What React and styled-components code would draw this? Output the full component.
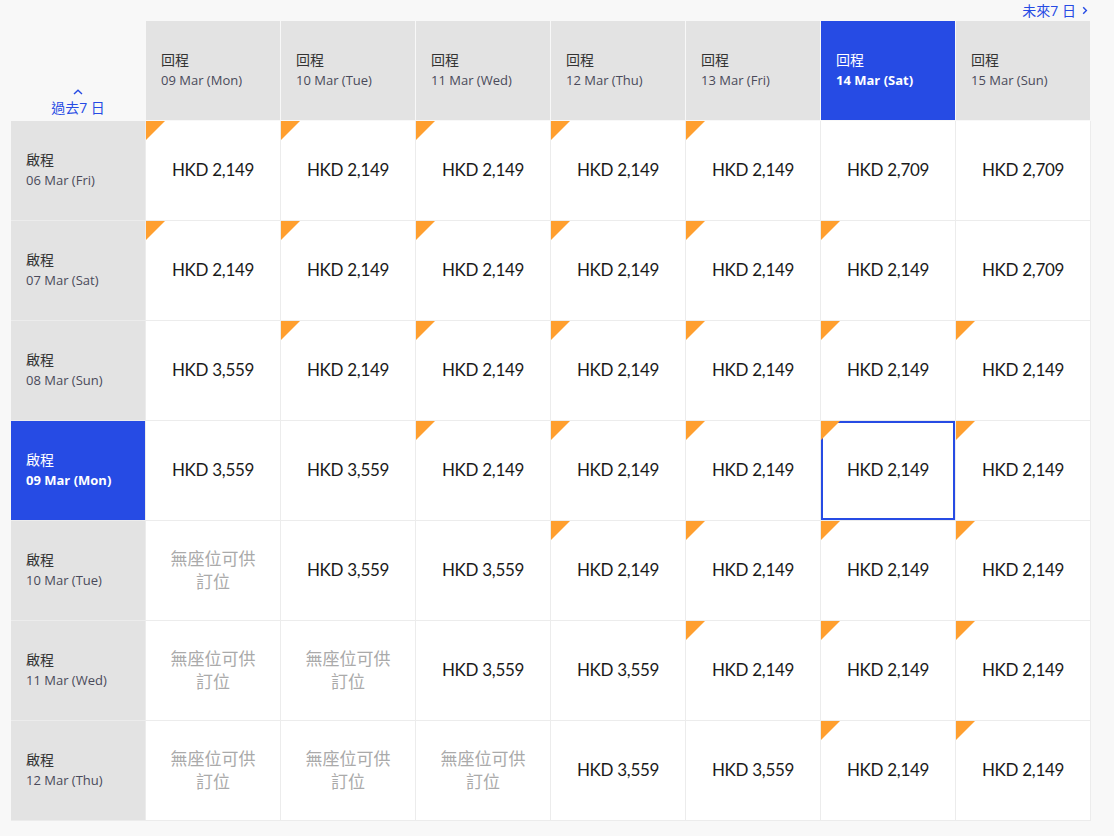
import React from 'react'
import styled, { createGlobalStyle, css } from 'styled-components'

const GlobalStyle = createGlobalStyle`
  body {
    margin: 0;
    background: #f8f8f8;
    font-family: 'Open Sans', 'Noto Sans CJK TC', sans-serif;
  }
`

const BLUE = '#264be4'
const COL = 134

const Page = styled.div`
  width: 1079px;
  padding: 0 0 0 11px;
`

const TopBar = styled.div`
  height: 21px;
  display: flex;
  justify-content: flex-end;
  align-items: center;
  padding-right: 2px;
`

const NavLink = styled.a`
  font-size: 14px;
  color: ${BLUE};
  cursor: pointer;
  font-family: 'Open Sans', 'Noto Sans CJK TC', sans-serif;
  display: inline-flex;
  align-items: center;
  gap: 6px;
  line-height: 1;
`

const HeaderRow = styled.div`
  display: grid;
  grid-template-columns: repeat(8, ${COL}px);
  column-gap: 1px;
  height: 99px;
  margin-bottom: 1px;
`

const Corner = styled.div`
  display: flex;
  flex-direction: column;
  align-items: center;
  justify-content: flex-end;
  padding-bottom: 5px;
`

const Caret = styled.svg`
  display: block;
  margin-bottom: 6px;
`

const HeadCell = styled.div`
  display: flex;
  flex-direction: column;
  justify-content: center;
  padding: 0 15px 3px;
  background: ${p => (p.active ? BLUE : '#e3e3e3')};
  color: ${p => (p.active ? '#fff' : '#333')};
`

const Label = styled.div`
  font-size: 14px;
  line-height: 20px;
  font-family: 'Noto Sans CJK TC', sans-serif;
`

const DateText = styled.div`
  font-size: 13px;
  line-height: 18px;
  margin-top: 2px;
  font-family: 'Open Sans', sans-serif;
  ${p => p.active ? css`
    font-weight: 700;
    color: #fff;
  ` : css`
    color: #4a4a5a;
  `}
`

const Body = styled.div`
  display: grid;
  grid-template-columns: repeat(8, ${COL}px);
  grid-auto-rows: 99px;
  gap: 1px;
  background: #ececec;
  padding: 0 1px 1px 0;
  width: max-content;
`

const PriceCell = styled.div`
  position: relative;
  background: #fff;
  display: flex;
  align-items: center;
  justify-content: center;
  text-align: center;
  ${p => p.selected && css`
    box-shadow: inset 0 0 0 2px ${BLUE};
  `}
`

const Flag = styled.span`
  position: absolute;
  top: 0;
  left: 0;
  width: 0;
  height: 0;
  border-top: 19px solid #ff9f2f;
  border-right: 19px solid transparent;
`

const Price = styled.span`
  font-family: 'Lato', sans-serif;
  font-weight: 400;
  font-size: 17px;
  letter-spacing: -0.3px;
  color: #1a1a1a;
  margin-bottom: 2px;
`

const SoldOut = styled.span`
  font-family: 'Noto Sans CJK TC', serif;
  font-size: 17px;
  line-height: 23px;
  color: #aaa;
  width: 90px;
  margin-bottom: 3px;
`

const returns = [
  '09 Mar (Mon)', '10 Mar (Tue)', '11 Mar (Wed)', '12 Mar (Thu)',
  '13 Mar (Fri)', '14 Mar (Sat)', '15 Mar (Sun)'
]
const activeReturn = 5

const A = 'HKD 2,149'
const B = 'HKD 2,709'
const C = 'HKD 3,559'
const N = null

// [price, hasFlag]
const rows = [
  { date: '06 Mar (Fri)', cells: [[A, 1], [A, 1], [A, 1], [A, 1], [A, 1], [B, 0], [B, 0]] },
  { date: '07 Mar (Sat)', cells: [[A, 1], [A, 1], [A, 1], [A, 1], [A, 1], [A, 1], [B, 0]] },
  { date: '08 Mar (Sun)', cells: [[C, 0], [A, 1], [A, 1], [A, 1], [A, 1], [A, 1], [A, 1]] },
  { date: '09 Mar (Mon)', active: true, cells: [[C, 0], [C, 0], [A, 1], [A, 1], [A, 1], [A, 1], [A, 1]] },
  { date: '10 Mar (Tue)', cells: [[N, 0], [C, 0], [C, 0], [A, 1], [A, 1], [A, 1], [A, 1]] },
  { date: '11 Mar (Wed)', cells: [[N, 0], [N, 0], [C, 0], [C, 0], [A, 1], [A, 1], [A, 1]] },
  { date: '12 Mar (Thu)', cells: [[N, 0], [N, 0], [N, 0], [C, 0], [C, 0], [A, 1], [A, 1]] }
]

const App = () =>
  <Page>
    <GlobalStyle />
    <TopBar>
      <NavLink>
        未來7 日
        <svg width="6" height="9" viewBox="0 0 6 9">
          <path d="M1.2 1.2 L4.4 4.5 L1.2 7.8" fill="none" stroke={BLUE} strokeWidth="1.4" />
        </svg>
      </NavLink>
    </TopBar>

    <HeaderRow>
      <Corner>
        <Caret width="10" height="6" viewBox="0 0 10 6">
          <path d="M1 5 L5 1.2 L9 5" fill="none" stroke={BLUE} strokeWidth="1.4" />
        </Caret>
        <NavLink>過去7 日</NavLink>
      </Corner>
      {returns.map((d, i) =>
        <HeadCell key={d} active={i === activeReturn}>
          <Label>回程</Label>
          <DateText active={i === activeReturn}>{d}</DateText>
        </HeadCell>
      )}
    </HeaderRow>

    <Body>
      {rows.map((row, r) =>
        <React.Fragment key={row.date}>
          <HeadCell active={row.active}>
            <Label>啟程</Label>
            <DateText active={row.active}>{row.date}</DateText>
          </HeadCell>
          {row.cells.map(([price, flag], c) =>
            <PriceCell key={c} selected={row.active && c === activeReturn}>
              {flag ? <Flag /> : null}
              {price ? <Price>{price}</Price> : <SoldOut>無座位可供訂位</SoldOut>}
            </PriceCell>
          )}
        </React.Fragment>
      )}
    </Body>
  </Page>

export default App
